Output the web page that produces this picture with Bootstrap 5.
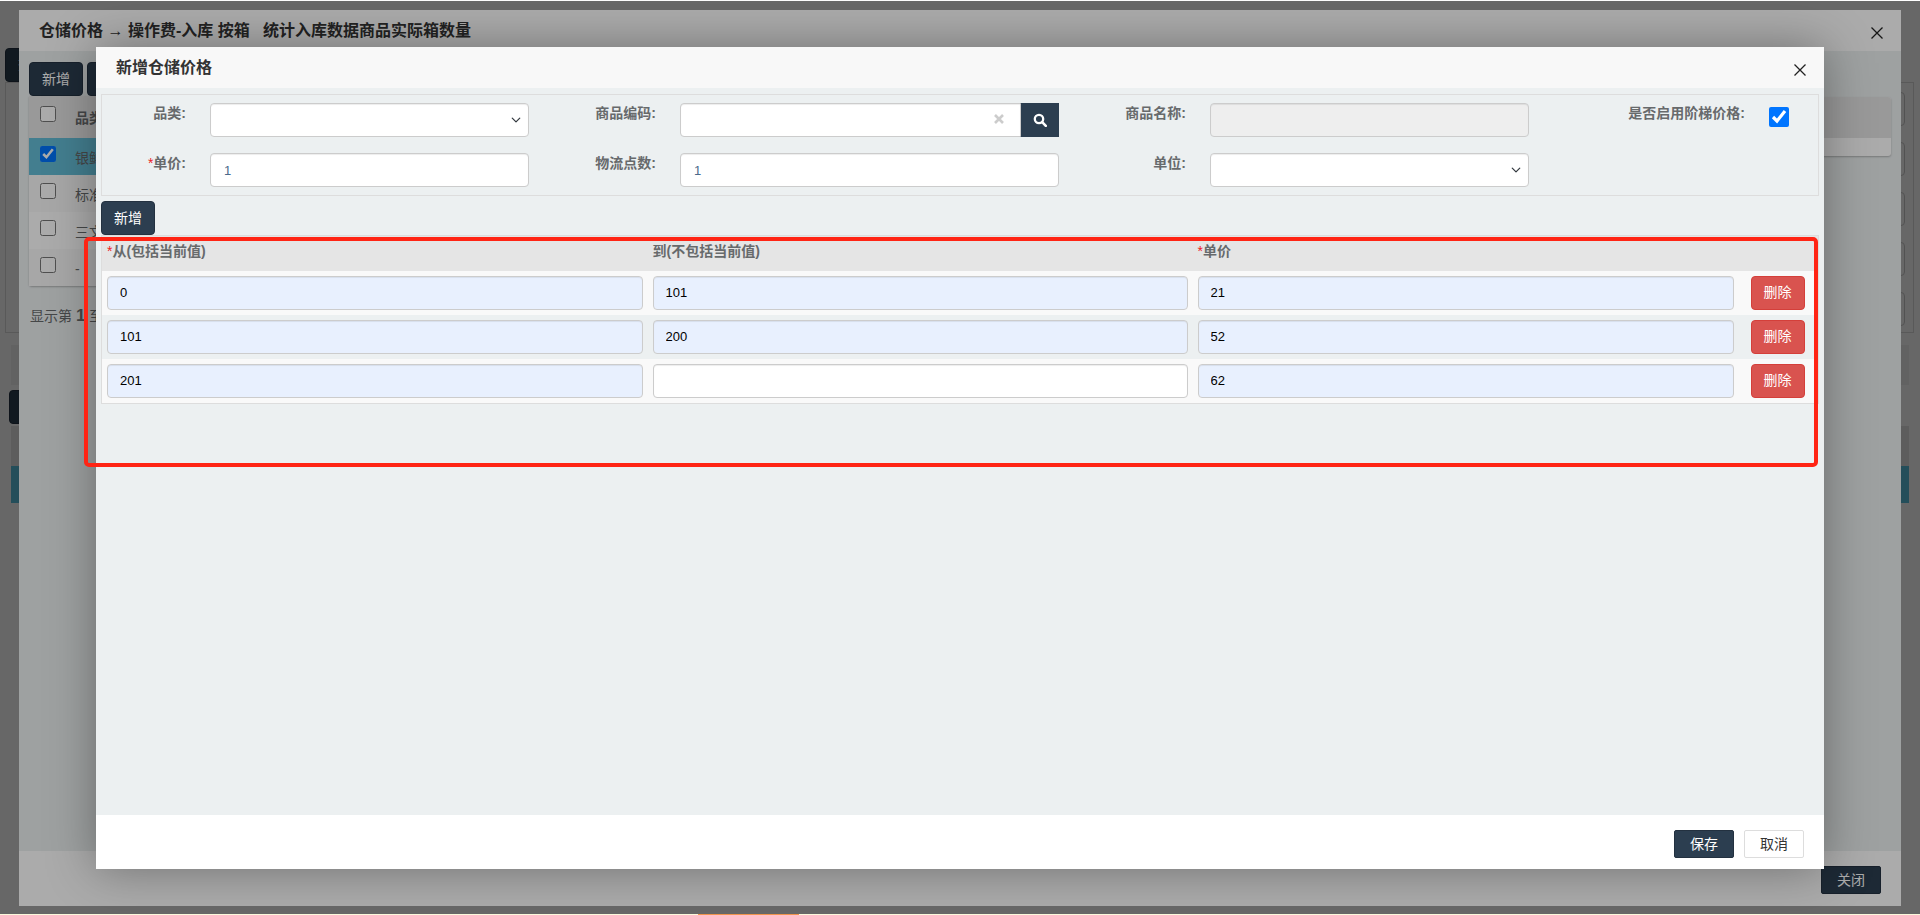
<!DOCTYPE html>
<html lang="zh-CN">

<head>
    <meta charset="UTF-8">
    <meta name="viewport" content="width=device-width, initial-scale=1.0">
    <title>新增仓储价格</title>
    <link rel="stylesheet" href="https://cdn.jsdelivr.net/npm/bootstrap@5.3.0/dist/css/bootstrap.min.css">
    <style>
        html, body {
            height: 100%;
            overflow: hidden;
        }

        body {
            background-color: #fff;
            color: #676a6c;
            font-family: "Liberation Sans", "Noto Sans CJK SC", sans-serif;
            font-size: 13px;
        }

        /* page behind the dialogs, only its edges are visible */
        .page-layer {
            padding: 48px 6px 0 5px;
        }

        .btn-navy {
            background-color: #2c3e50;
            border: 1px solid #233140;
            color: #fff;
            font-size: 14px;
            height: 34px;
            width: 54px;
            padding: 0;
            border-radius: 4px;
        }

        .btn-navy:hover {
            background-color: #2c3e50;
            color: #fff;
        }

        .page-panel {
            border: 1px solid #ddd;
            height: 251px;
            padding: 9px 8px 0 0;
            gap: 16px;
        }

        .page-field {
            height: 34px;
            width: 60px;
            border: 1px solid #ccc;
            border-radius: 4px;
        }

        .page-strip {
            height: 40px;
            margin: 12px 5px 5px 6px;
            background-color: #f3f3f3;
        }

        .page-table {
            margin: 2px 5px 0 6px;
        }

        .page-table-head {
            height: 40px;
            background-color: #e5e5e5;
        }

        .page-table-row {
            height: 37px;
            background-color: #5bc0de;
        }

        /* stacked dialogs */
        .dim-layer {
            position: fixed;
            top: 1px;
            left: 0;
            right: 0;
            bottom: 1px;
        }

        .dim-first {
            background-color: rgba(0, 0, 0, .4);
        }

        .dim-second {
            background-color: rgba(0, 0, 0, .33);
        }

        .bottom-strip {
            position: fixed;
            left: 0;
            right: 0;
            bottom: 0;
            height: 1px;
            background-color: #fbf8dc;
        }

        .bottom-strip i {
            display: block;
            width: 101px;
            height: 1px;
            margin-left: 698px;
            background-color: #f0944d;
        }

        .win-outer {
            position: absolute;
            left: 19px;
            top: 9px;
            width: 1882px;
            height: 896px;
            border: 0;
            border-radius: 2px;
            background-color: #ecf0f1;
        }

        .win-inner {
            position: absolute;
            left: 96px;
            top: 46px;
            width: 1728px;
            height: 822px;
            border: 0;
            border-radius: 0;
            background-color: #ecf0f1;
            box-shadow: 0 0 45px rgba(0, 0, 0, .35);
        }

        .win-head {
            flex-shrink: 0;
            border: 0;
            border-radius: 0;
            background-color: #f8f8f8;
            padding: 0;
        }

        .win-outer .win-head {
            height: 41px;
            background-color: #fff;
            padding-left: 20px;
        }

        .win-inner .win-head {
            height: 41px;
            padding-left: 20px;
        }

        .win-title {
            font-size: 16px;
            font-weight: 600;
            color: #333;
            line-height: 1;
            margin: 0;
        }

        .win-close {
            position: absolute;
            width: 14px;
            height: 14px;
            padding: 0;
            border: 0;
            background: none;
            line-height: 0;
        }

        .win-outer .win-close {
            right: 17px;
            top: 16px;
        }

        .win-inner .win-close {
            right: 17px;
            top: 16px;
        }

        .win-foot {
            flex-shrink: 0;
            border: 0;
            border-radius: 0;
            padding: 0 20px;
            gap: 10px;
            background-color: #fff;
            flex-wrap: nowrap;
        }

        .win-outer .win-foot {
            height: 55px;
            padding-top: 15px;
            align-items: flex-start;
        }

        .win-inner .win-foot {
            height: 54px;
            padding-top: 15px;
            align-items: flex-start;
        }

        .btn-wide {
            width: 60px;
            height: 28px;
            margin: 0;
            border-radius: 2px;
        }

        .btn-plain {
            background-color: #fff;
            border: 1px solid #ddd;
            color: #333;
            font-size: 14px;
            padding: 0;
        }

        /* outer dialog content */
        .outer-body {
            flex: 1;
            padding: 11px 10px 0 10px;
            background-color: #ecf0f1;
            min-height: 0;
        }

        .outer-grid {
            align-items: flex-start;
        }

        .outer-table-wrap {
            width: 1000px;
            background-color: #f9f9f9;
            border-radius: 0 0 3px 3px;
            box-shadow: 0 1px 2px rgba(0, 0, 0, .25);
        }

        .outer-row {
            height: 37px;
            background-color: #f9f9f9;
            padding: 8px 0 0 11px;
            gap: 19px;
            font-size: 14px;
        }

        .outer-row input {
            width: 16px;
            height: 16px;
            margin: 0;
        }

        .outer-row span {
            line-height: 20px;
            margin-top: 2px;
        }

        .outer-row.row-head {
            height: 42px;
            padding-top: 10px;
            background-color: #e5e5e5;
            font-weight: 700;
        }

        .outer-row.row-picked {
            background-color: #64bcd6;
        }

        .outer-row.row-alt {
            background-color: #ffffff;
        }

        .outer-side {
            flex: 1;
            background-color: #fff;
            height: 59px;
            margin-top: 1px;
            border-radius: 0 3px 3px 3px;
            box-shadow: 0 1px 2px rgba(0, 0, 0, .25);
        }

        .outer-side-head {
            height: 41px;
            background-color: #e5e5e5;
            border-radius: 0 3px 0 0;
        }

        .outer-pager {
            margin-top: 17px;
            padding-left: 1px;
            font-size: 14px;
            color: #676a6c;
        }

        .outer-pager b {
            font-size: 17px;
        }

        /* inner dialog content */
        .inner-body {
            flex: 1;
            padding: 6px 5px 0 5px;
            background-color: #ecf0f1;
            min-height: 0;
        }

        .filter-panel {
            display: grid;
            grid-template-columns: 108px 319px 151px 379px 151px 319px 240px 20px;
            grid-auto-rows: 34px;
            row-gap: 16px;
            padding: 8px 0 8px 0;
            height: 102px;
            border: 1px solid #ddd;
            background-color: #ecf0f1;
        }

        .filter-label {
            text-align: right;
            padding: 0 24px 0 0;
            margin: 0;
            font-size: 14px;
            font-weight: 700;
            line-height: 20px;
        }

        .req {
            color: #ed1c24;
            font-weight: 400;
        }

        .field-box {
            height: 34px;
            min-height: 34px;
            font-size: 13px;
            padding: 0 13px;
            color: #4b6a8b;
            border: 1px solid #ccc;
            border-radius: 4px;
            box-shadow: inset 0 1px 1px rgba(0, 0, 0, .075);
        }

        .field-box:disabled {
            background-color: #eee;
        }

        .form-select.field-box {
            background-position: right 6px center;
            background-size: 12px 10px;
        }

        .code-group {
            flex-wrap: nowrap;
        }

        .code-field {
            flex: 1;
            min-width: 0;
        }

        .code-clear {
            position: absolute;
            right: 55px;
            top: 11px;
            width: 10px;
            height: 10px;
            line-height: 0;
            z-index: 5;
        }

        .input-group .code-search {
            width: 39px;
            height: 34px;
            margin-left: 0;
            flex-shrink: 0;
            background-color: #2c3e50;
        }

        .tier-check {
            width: 20px;
            height: 20px;
            margin: 4px 0 0 0;
        }

        .add-btn {
            margin-top: 5px;
            display: block;
        }

        .tier-table {
            --bs-table-bg: transparent;
            table-layout: fixed;
            margin: 0;
            border-top: 1px solid #ddd;
            border-left: 1px solid #ddd;
            border-right: 1px solid #ddd;
            color: #000;
        }

        .tier-table th {
            height: 35px;
            padding: 5px 5px 0 5px;
            vertical-align: top;
            background-color: #e5e5e5;
            border: 0;
            color: #676a6c;
            font-size: 14px;
            font-weight: 700;
            line-height: 20px;
        }

        .tier-table tbody td {
            height: 44px;
            padding: 5px;
            background-color: #f9f9f9;
            border: 0;
        }

        .tier-table tbody tr:nth-child(even) td {
            background-color: #ecf0f1;
        }

        .tier-table tbody tr:last-child td {
            border-bottom: 1px solid #ddd;
        }

        .tier-table .form-control {
            color: #000;
            background-color: #e8f0fe;
            padding: 0 12px;
        }

        .tier-table .form-control.is-blank {
            background-color: #fff;
        }

        .tier-table .action-cell {
            padding-left: 12px;
        }

        .btn-remove {
            width: 54px;
            height: 34px;
            padding: 0;
            font-size: 14px;
            color: #fff;
            background-color: #d9534f;
            border: 1px solid #d43f3a;
            border-radius: 4px;
        }

        .mark-box {
            position: absolute;
            left: 84px;
            top: 236px;
            width: 1734px;
            height: 230px;
            border: 4px solid #ff2414;
            border-radius: 5px;
            pointer-events: none;
        }
    </style>
</head>

<body>
    <div class="page-layer">
        <button class="btn btn-navy d-block" type="button">查询</button>
        <div class="page-panel d-flex flex-column align-items-end">
            <div class="page-field"></div>
            <div class="page-field"></div>
            <div class="page-field"></div>
            <div class="page-field"></div>
            <div class="page-field"></div>
        </div>
        <div class="page-strip"></div>
        <button class="btn btn-navy d-block ms-1" type="button">新增</button>
        <div class="page-table">
            <div class="page-table-head"></div>
            <div class="page-table-row"></div>
        </div>
    </div>

    <div class="dim-layer dim-first">
        <div class="modal-content win-outer d-flex flex-column">
            <div class="modal-header win-head">
                <h5 class="win-title">仓储价格 → 操作费-入库 按箱&nbsp;&nbsp;&nbsp;统计入库数据商品实际箱数量</h5>
                <button type="button" class="win-close" aria-label="Close">
                    <svg width="14" height="14" viewBox="0 0 14 14">
                        <path d="M1.5 1.5 12.5 12.5M12.5 1.5 1.5 12.5" stroke="#222" stroke-width="1.3" fill="none"></path>
                    </svg>
                </button>
            </div>
            <div class="outer-body">
                <div class="d-flex gap-1 mb-0">
                    <button class="btn btn-navy" type="button">新增</button>
                    <button class="btn btn-navy" type="button" aria-label="修改"></button>
                </div>
                <div class="d-flex outer-grid">
                    <div class="outer-table-wrap">
                        <div class="outer-row row-head d-flex align-items-start"><input type="checkbox"><span>品类</span></div>
                        <div class="outer-row row-picked d-flex align-items-start"><input type="checkbox" checked><span>银鲜</span></div>
                        <div class="outer-row d-flex align-items-start"><input type="checkbox"><span>标准</span></div>
                        <div class="outer-row row-alt d-flex align-items-start"><input type="checkbox"><span>三文鱼</span></div>
                        <div class="outer-row d-flex align-items-start"><input type="checkbox"><span>-</span></div>
                    </div>
                    <div class="outer-side">
                        <div class="outer-side-head"></div>
                    </div>
                </div>
                <div class="outer-pager">显示第 <b>1</b> 至 <b>4</b> 项</div>
            </div>
            <div class="modal-footer win-foot">
                <button class="btn btn-navy btn-wide" type="button">关闭</button>
            </div>
        </div>
    </div>

    <div class="dim-layer dim-second">
        <div class="modal-content win-inner d-flex flex-column">
            <div class="modal-header win-head">
                <h5 class="win-title">新增仓储价格</h5>
                <button type="button" class="win-close" aria-label="Close">
                    <svg width="14" height="14" viewBox="0 0 14 14">
                        <path d="M1.5 1.5 12.5 12.5M12.5 1.5 1.5 12.5" stroke="#222" stroke-width="1.3" fill="none"></path>
                    </svg>
                </button>
            </div>
            <div class="inner-body">
                <form>
                    <div class="filter-panel">
                        <label class="filter-label">品类:</label>
                        <select class="form-select field-box">
                            <option></option>
                        </select>
                        <label class="filter-label">商品编码:</label>
                        <div class="input-group code-group position-relative">
                            <input type="text" class="form-control field-box code-field">
                            <span class="code-clear">
                                <svg width="10" height="10" viewBox="0 0 10 10">
                                    <path d="M1 1 9 9M9 1 1 9" stroke="#ccc" stroke-width="2.6" fill="none"></path>
                                </svg>
                            </span>
                            <span class="code-search d-flex align-items-center justify-content-center">
                                <svg width="14" height="14" viewBox="0 0 14 14">
                                    <circle cx="6" cy="6" r="4.2" fill="none" stroke="#fff" stroke-width="2.3"></circle>
                                    <line x1="9.2" y1="9.2" x2="12.8" y2="12.8" stroke="#fff" stroke-width="2.6" stroke-linecap="round"></line>
                                </svg>
                            </span>
                        </div>
                        <label class="filter-label">商品名称:</label>
                        <input type="text" class="form-control field-box" disabled>
                        <label class="filter-label">是否启用阶梯价格:</label>
                        <input type="checkbox" class="tier-check" checked>

                        <label class="filter-label"><span class="req">*</span>单价:</label>
                        <input type="text" class="form-control field-box" value="1">
                        <label class="filter-label">物流点数:</label>
                        <input type="text" class="form-control field-box" value="1">
                        <label class="filter-label">单位:</label>
                        <select class="form-select field-box">
                            <option></option>
                        </select>
                    </div>

                    <button class="btn btn-navy add-btn" type="button">新增</button>

                    <table class="table tier-table">
                        <colgroup>
                            <col style="width: 546px">
                            <col style="width: 545px">
                            <col style="width: 546px">
                            <col>
                        </colgroup>
                        <thead>
                            <tr>
                                <th><span class="req">*</span>从(包括当前值)</th>
                                <th>到(不包括当前值)</th>
                                <th><span class="req">*</span>单价</th>
                                <th></th>
                            </tr>
                        </thead>
                        <tbody>
                            <tr>
                                <td><input type="text" class="form-control field-box" value="0"></td>
                                <td><input type="text" class="form-control field-box" value="101"></td>
                                <td><input type="text" class="form-control field-box" value="21"></td>
                                <td class="action-cell"><button class="btn btn-remove" type="button">删除</button></td>
                            </tr>
                            <tr>
                                <td><input type="text" class="form-control field-box" value="101"></td>
                                <td><input type="text" class="form-control field-box" value="200"></td>
                                <td><input type="text" class="form-control field-box" value="52"></td>
                                <td class="action-cell"><button class="btn btn-remove" type="button">删除</button></td>
                            </tr>
                            <tr>
                                <td><input type="text" class="form-control field-box" value="201"></td>
                                <td><input type="text" class="form-control field-box is-blank"></td>
                                <td><input type="text" class="form-control field-box" value="62"></td>
                                <td class="action-cell"><button class="btn btn-remove" type="button">删除</button></td>
                            </tr>
                        </tbody>
                    </table>
                </form>
            </div>
            <div class="modal-footer win-foot">
                <button class="btn btn-navy btn-wide" type="button">保存</button>
                <button class="btn btn-plain btn-wide" type="button">取消</button>
            </div>
        </div>
        <div class="mark-box"></div>
    </div>

    <div class="bottom-strip"><i></i></div>

    <script src="https://cdn.jsdelivr.net/npm/bootstrap@5.3.0/dist/js/bootstrap.bundle.min.js"></script>
</body>

</html>
